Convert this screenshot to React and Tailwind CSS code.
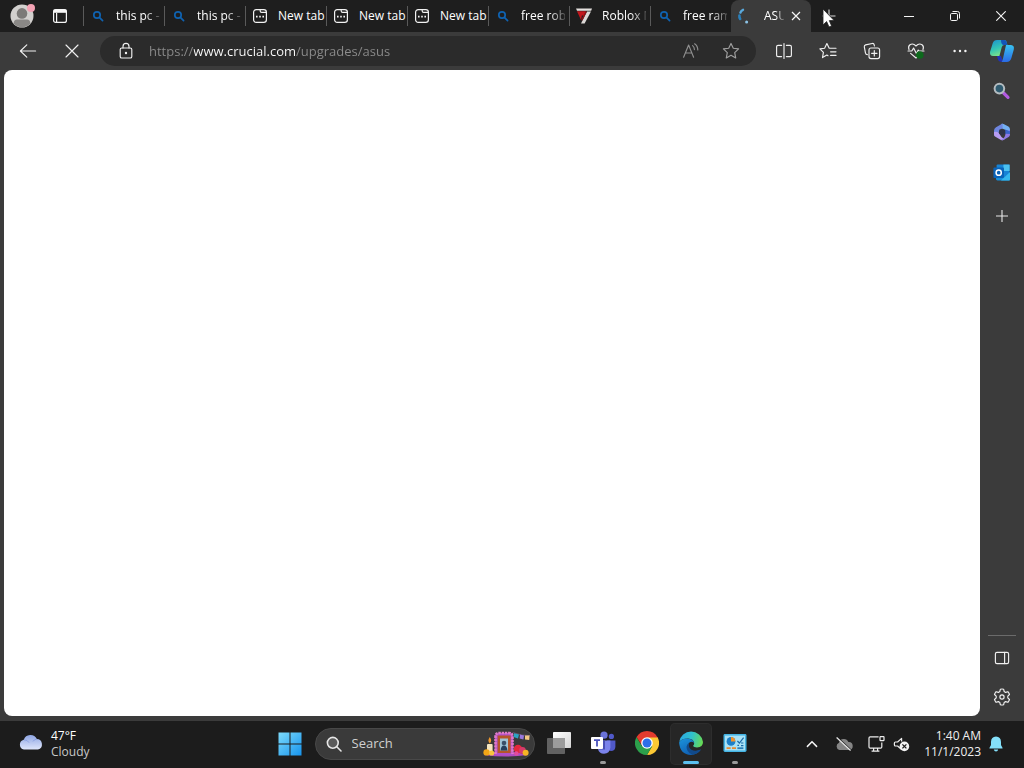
import { useState } from "react";

/* ---------- TAB ICONS ---------- */
function SearchFavicon() {
  return (
    <svg width="12" height="12" viewBox="0 0 12 12" fill="none" stroke="#0f62b0" strokeWidth="1.7" strokeLinecap="round">
      <circle cx="5" cy="5" r="3.2" />
      <path d="M7.6 7.6 L10.6 10.6" />
    </svg>
  );
}

function NewTabFavicon() {
  return (
    <svg width="16" height="16" viewBox="0 0 16 16" fill="none" stroke="#f2f2f2" strokeWidth="1.2">
      <rect x="1.6" y="1.6" width="12.8" height="12.8" rx="2.6" />
      <path d="M8.2 1.8 V3 Q8.2 4.4 9.6 4.4 H14.2" />
      <path d="M4 8.6 H5.6 M7.2 8.6 H8.8 M10.4 8.6 H12" strokeWidth="1.7" />
    </svg>
  );
}

function RobloxFavicon() {
  return (
    <svg width="16" height="16" viewBox="0 0 16 16">
      <path d="M0 0.5 H16 L15.2 2.8 H1 Z" fill="#e4e0de" />
      <path d="M1 3.2 H10 L8 9 L6 7 L5 12 Z" fill="#c3161c" />
      <path d="M11 3.4 H15 L8.6 15.5 H5 Z" fill="#dcd8d6" />
      <path d="M9.4 3.4 H11 L6.4 12.6 L5 12 Z" fill="#8d1115" />
    </svg>
  );
}

function LoadingFavicon() {
  return (
    <svg width="14" height="16" viewBox="0 0 14 16" fill="none" strokeLinecap="round">
      <path d="M3.4 4.6 Q4 2.6 6 1.8" stroke="#5aa9dc" strokeWidth="2.4" />
      <path d="M2.4 7.6 Q2.2 9.4 3.2 11" stroke="#2a7fba" strokeWidth="2.6" />
      <circle cx="9.6" cy="14" r="1.5" fill="#8cc3e6" />
    </svg>
  );
}

const favicons = {
  search: <SearchFavicon />,
  newtab: <NewTabFavicon />,
  roblox: <RobloxFavicon />,
  loading: <LoadingFavicon />,
};

const tabs = [
  { title: "this pc -", icon: "search", long: true },
  { title: "this pc -", icon: "search", long: true },
  { title: "New tab", icon: "newtab" },
  { title: "New tab", icon: "newtab" },
  { title: "New tab", icon: "newtab" },
  { title: "free robux", icon: "search", long: true },
  { title: "Roblox M", icon: "roblox", long: true },
  { title: "free ram", icon: "search", long: true },
];

function LineIcon({ size = 18, color = "#f0f0f0", children }) {
  return (
    <svg
      width={size}
      height={size}
      viewBox="0 0 18 18"
      fill="none"
      stroke={color}
      strokeWidth="1.15"
      strokeLinecap="round"
      strokeLinejoin="round"
    >
      {children}
    </svg>
  );
}

function ToolButton({ label, children }) {
  return (
    <button aria-label={label} className="flex h-9 w-11 shrink-0 items-center justify-center">
      {children}
    </button>
  );
}

/* ---------- TAB STRIP ---------- */
function TabStrip() {
  return (
    <div className="relative flex h-8 bg-[#1e1e1e] text-xs text-white">
      <button aria-label="Profile" className="flex w-11 shrink-0 items-center justify-center">
        <svg width="26" height="26" viewBox="0 0 26 26">
          <circle cx="13" cy="13" r="11.5" fill="#d2d0ce" />
          <path d="M4.5 20.6 Q5 16.6 8 16.6 H18 Q21 16.6 21.5 20.6 A11.5 11.5 0 0 1 4.5 20.6 Z" fill="#8a8886" />
          <circle cx="13" cy="10.4" r="5.3" fill="#7c7a78" />
          <circle cx="22" cy="5" r="4" fill="#f4a3b5" />
        </svg>
      </button>
      <button aria-label="Tab actions" className="flex w-8 shrink-0 items-center justify-center">
        <svg width="16" height="16" viewBox="0 0 16 16" fill="none" stroke="#f5f5f5" strokeWidth="1.2">
          <rect x="1.6" y="1.6" width="12.8" height="12.8" rx="2" />
          <path d="M1.6 3.2 H14.4" strokeWidth="3.2" />
          <path d="M4.6 5 V14" />
        </svg>
      </button>

      <div className="ml-[7px] flex min-w-0">
        {tabs.map((tab, index) => (
          <button
            key={index}
            className="flex w-[81px] shrink-0 items-center before:h-5 before:w-px before:bg-[#5a5a5a]"
          >
            <span className="ml-1.5 flex w-4 justify-center">{favicons[tab.icon]}</span>
            <span
              className={`ml-2.5 text-left whitespace-nowrap ${
                tab.long
                  ? "w-11 overflow-hidden [mask-image:linear-gradient(to_right,black_65%,rgba(0,0,0,0.2))]"
                  : ""
              }`}
            >
              {tab.title}
            </span>
          </button>
        ))}
      </div>

      {/* Active tab */}
      <div className="flex w-20 shrink-0 items-center rounded-t-lg bg-[#3b3b3b]">
        <button className="flex items-center">
          <span className="ml-[5px] flex w-4 justify-center">{favicons.loading}</span>
          <span className="ml-3 w-5 overflow-hidden text-left whitespace-nowrap [mask-image:linear-gradient(to_right,black_60%,rgba(0,0,0,0.2))]">
            ASUS
          </span>
        </button>
        <button aria-label="Close tab" className="flex w-6 items-center justify-center">
          <svg width="10" height="10" viewBox="0 0 10 10" stroke="#f5f5f5" strokeWidth="1.2">
            <path d="M1 1 L9 9 M9 1 L1 9" />
          </svg>
        </button>
      </div>
      <button aria-label="New tab" className="flex w-9 shrink-0 items-center justify-center">
        <svg width="14" height="14" viewBox="0 0 14 14" stroke="#d8d8d8" strokeWidth="1.1">
          <path d="M7 0.5 V13.5 M0.5 7 H13.5" />
        </svg>
      </button>

      {/* Window controls */}
      <div className="ml-auto flex">
        <button aria-label="Minimize" className="flex w-[46px] items-center justify-center">
          <svg width="10" height="10" viewBox="0 0 10 10" stroke="#f5f5f5" strokeWidth="1">
            <path d="M0 5.5 H10" />
          </svg>
        </button>
        <button aria-label="Restore" className="flex w-[46px] items-center justify-center">
          <svg width="10" height="10" viewBox="0 0 10 10" fill="none" stroke="#f5f5f5" strokeWidth="1">
            <rect x="0.5" y="2.5" width="7" height="7" rx="1.2" />
            <path d="M2.5 0.5 H7.5 Q9.5 0.5 9.5 2.5 V7.5" />
          </svg>
        </button>
        <button aria-label="Close" className="flex w-[46px] items-center justify-center">
          <svg width="10" height="10" viewBox="0 0 10 10" stroke="#f5f5f5" strokeWidth="1.1">
            <path d="M0.3 0.3 L9.7 9.7 M9.7 0.3 L0.3 9.7" />
          </svg>
        </button>
      </div>

      {/* Mouse pointer */}
      <svg className="pointer-events-none absolute top-2 left-[822px]" width="13" height="20" viewBox="0 0 13 20">
        <path d="M1 1 V17 L4.6 13.6 L7 19 L9.6 17.9 L7.3 12.6 H12.2 Z" fill="#ffffff" stroke="#1e1e1e" strokeWidth="0.8" />
      </svg>
    </div>
  );
}

/* ---------- TOOLBAR ---------- */
function Toolbar() {
  const [url, setUrl] = useState("https://www.crucial.com/upgrades/asus");

  return (
    <div className="flex h-[38px] items-center pl-1.5">
      <ToolButton label="Back">
        <LineIcon>
          <path d="M1.4 9 H16.6 M7.8 2.8 L1.4 9 L7.8 15.2" />
        </LineIcon>
      </ToolButton>
      <ToolButton label="Stop">
        <LineIcon>
          <path d="M3 3 L15 15 M15 3 L3 15" />
        </LineIcon>
      </ToolButton>

      <div className="mx-1.5 flex h-[30px] min-w-0 flex-1 items-center rounded-full bg-[#2b2b2b] pr-[5px] pl-[17px]">
        <button aria-label="View site information">
          <LineIcon>
            <rect x="3.2" y="6" width="11.6" height="10" rx="1.6" />
            <path d="M6 6 V4.4 A3 3 0 0 1 12 4.4 V6" />
            <circle cx="9" cy="11" r="0.6" fill="#f0f0f0" />
          </LineIcon>
        </button>
        <input
          aria-label="Address bar"
          value={url}
          spellCheck={false}
          onChange={(e) => setUrl(e.target.value)}
          className="ml-3.5 min-w-0 flex-1 bg-[linear-gradient(to_right,#8c8c8c_45px,#ffffff_45px,#ffffff_147px,#8c8c8c_147px)] bg-clip-text pt-0.5 text-[13px] text-transparent caret-white outline-none"
        />
        <button aria-label="Read aloud" className="flex w-10 justify-center">
          <LineIcon color="#8f8f8f">
            <path d="M1.6 15.2 L6.6 3 L11.6 15.2 M3.4 11 H9.8" />
            <path d="M10.6 3.6 Q12.4 5 12.4 7.6 M12.6 1.8 Q15.8 4 15.8 8" />
          </LineIcon>
        </button>
        <button aria-label="Add to favorites" className="flex w-10 justify-center">
          <LineIcon color="#a0a0a0">
            <path d="M9 1.4 L11.3 6.2 L16.6 6.9 L12.7 10.6 L13.7 15.9 L9 13.3 L4.3 15.9 L5.3 10.6 L1.4 6.9 L6.7 6.2 Z" />
          </LineIcon>
        </button>
      </div>

      <ToolButton label="Split screen">
        <LineIcon>
          <path d="M6.6 3.4 H3 Q1.6 3.4 1.6 4.8 V13.2 Q1.6 14.6 3 14.6 H6.6 M11.4 3.4 H15 Q16.4 3.4 16.4 4.8 V13.2 Q16.4 14.6 15 14.6 H11.4 M9 1.6 V16.4" />
        </LineIcon>
      </ToolButton>
      <ToolButton label="Favorites">
        <LineIcon>
          <path d="M11.4 6.2 H10.2 L7.9 1.6 L5.6 6.2 L0.9 6.9 L4.4 10.4 L3.5 15.6 L7.9 13.1 L9 13.7 M10.6 6.2 H17 M11.6 9.8 H17 M11.6 13.4 H17" />
        </LineIcon>
      </ToolButton>
      <ToolButton label="Collections">
        <LineIcon>
          <rect x="6" y="6" width="10.6" height="10.6" rx="2" />
          <path d="M11.3 8.6 V14 M8.6 11.3 H14" />
          <path d="M4.4 12.6 Q2.8 12.6 2.5 11.2 L1.3 4.8 Q1.1 3.3 2.6 2.9 L9.2 1.5 Q10.8 1.2 11.2 2.8 L11.4 4" />
        </LineIcon>
      </ToolButton>
      <ToolButton label="Browser essentials">
        <LineIcon>
          <path d="M2 7.6 Q0.8 4.4 3 2.8 Q6 0.8 9 4 Q12 0.8 15 2.8 Q17.2 4.4 16 7.6" />
          <path d="M1 9 H4.8 L6.6 6 L9.4 11.4 L11.2 8 L12 9 H17" />
          <path d="M3.6 11.4 L9 16 L10.4 14.8" />
          <circle cx="12.8" cy="13" r="3.8" fill="#0d6a1c" stroke="none" />
        </LineIcon>
      </ToolButton>
      <ToolButton label="Settings and more">
        <svg width="18" height="18" viewBox="0 0 18 18" fill="#f5f5f5">
          <circle cx="3.6" cy="9" r="1.2" />
          <circle cx="9" cy="9" r="1.2" />
          <circle cx="14.4" cy="9" r="1.2" />
        </svg>
      </ToolButton>
      <button aria-label="Copilot" className="flex w-[42px] shrink-0 items-center justify-center pr-0.5">
        <svg width="26" height="24" viewBox="0 0 26 24">
          <defs>
            <linearGradient id="pilotLeft" x1="0" y1="0" x2="0.4" y2="1">
              <stop offset="0" stopColor="#1b8fd0" />
              <stop offset="0.6" stopColor="#35c6b4" />
              <stop offset="1" stopColor="#7be08a" />
            </linearGradient>
            <linearGradient id="pilotRight" x1="0" y1="0" x2="0" y2="1">
              <stop offset="0" stopColor="#38c2f0" />
              <stop offset="1" stopColor="#2a6be6" />
            </linearGradient>
          </defs>
          <path d="M8 1 H15 Q17.4 1 17.8 3.4 L18.4 6 H15.4 Q13.4 6 12.8 8 L10.4 17 H4 Q0.6 17 1 13 L3.8 4 Q4.8 1 8 1 Z" fill="url(#pilotLeft)" />
          <path d="M12 1 H15 Q17.4 1 17.8 3.4 L18.4 6 H14.4 Q12 5.6 12 1 Z" fill="#1455b8" />
          <path d="M8 17 H12 L14 22.8 H11.6 Q9.4 22.8 8.8 20 Z" fill="#2033b8" />
          <path d="M17 6 H22 Q25.6 6.4 24.8 10.4 L22.4 19 Q21.2 23 17.6 23 H12.6 Q13.4 22 14 19.6 Z" fill="url(#pilotRight)" />
        </svg>
      </button>
    </div>
  );
}

/* ---------- EDGE SIDEBAR ---------- */
function Sidebar() {
  return (
    <div className="flex w-11 shrink-0 flex-col items-center">
      <button aria-label="Search" className="flex h-[42px] items-center">
        <svg width="18" height="18" viewBox="0 0 18 18">
          <path d="M10.6 11 L15 15.4" stroke="#b25be0" strokeWidth="3.2" strokeLinecap="round" />
          <circle cx="6.4" cy="6.6" r="4.8" fill="#2f5b70" stroke="#b4bcc0" strokeWidth="2" />
        </svg>
      </button>
      <button aria-label="Microsoft 365" className="flex h-10 items-center">
        <svg width="18" height="18" viewBox="0 0 18 18">
          <path d="M8.6 0.8 Q9.6 0.4 10.6 1 L15.4 3.6 Q17 4.6 17 6.6 V9 L7 4.6 Z" fill="#74b0f2" />
          <path d="M9.6 0.6 L3 4.2 Q1 5.4 1 7.6 V12.4 Q4.4 12.4 5.6 10.4 Q6 6.4 9.6 5.6 Z" fill="#6f86e0" />
          <path d="M1 9 V11.4 Q1 13 2.4 13.8 L8 17 Q9.2 17.6 10.4 17 L11.6 16.2 Q8 14.4 6 10.2 Q4 8.4 1 9 Z" fill="#b79cf2" />
          <path d="M17 6.6 V11.6 Q17 13.2 15.6 14 L10.4 17 Q9 17.4 8 16.8 Q12 15 12.6 10.4 Z" fill="#8f7ae6" />
          <path d="M6.4 6.6 L12.4 7 L12.2 10.6 L9 12.8 L6 10.4 Z" fill="#303348" />
          <path d="M12.2 6.6 L17 8.2 V11 L12.4 10.8 Z" fill="#3a62cc" />
        </svg>
      </button>
      <button aria-label="Outlook" className="flex h-[42px] items-center">
        <svg width="18" height="18" viewBox="0 0 18 18">
          <rect x="3.6" y="0.6" width="13" height="14" rx="1" fill="#1683d6" />
          <path d="M10.4 0.6 H16.6 V7 H10.4 Z" fill="#4bc1f0" />
          <path d="M3 8 L17 16.4 H4.6 Q3 16.4 3 15 Z" fill="#1590dc" />
          <path d="M17 8 V15.4 Q17 16.4 16 16.4 H8 Z" fill="#34b7ee" />
          <rect x="0.4" y="3.4" width="10.6" height="10.6" rx="1" fill="#0a63b8" />
          <circle cx="5.7" cy="8.7" r="2.6" fill="none" stroke="#ffffff" strokeWidth="1.5" />
        </svg>
      </button>
      <button aria-label="Customize" className="flex h-11 items-center">
        <svg width="14" height="14" viewBox="0 0 14 14" stroke="#e8e8e8" strokeWidth="1.1">
          <path d="M7 1 V13 M1 7 H13" />
        </svg>
      </button>

      <div className="mt-auto flex flex-col items-center border-t border-[#6b6b6b] px-[5px] pt-0.5">
        <button aria-label="Hide sidebar" className="flex h-10 items-center">
          <LineIcon>
            <rect x="2.4" y="3.4" width="13.2" height="11.2" rx="1.6" />
            <path d="M11.6 3.4 V14.6" />
          </LineIcon>
        </button>
        <button aria-label="Sidebar settings" className="flex h-[38px] items-center">
          <LineIcon>
            <circle cx="9" cy="9" r="2.1" />
            <path d="M7.4 1.2 Q9 0.8 10.6 1.2 L11.2 3.6 L12.6 4.4 L14.9 3.7 Q16 4.9 16.5 6.5 L14.8 8.1 V9.9 L16.5 11.5 Q16 13.1 14.9 14.3 L12.6 13.6 L11.2 14.4 L10.6 16.8 Q9 17.2 7.4 16.8 L6.8 14.4 L5.4 13.6 L3.1 14.3 Q2 13.1 1.5 11.5 L3.2 9.9 V8.1 L1.5 6.5 Q2 4.9 3.1 3.7 L5.4 4.4 L6.8 3.6 Z" />
          </LineIcon>
        </button>
      </div>
    </div>
  );
}

/* ---------- TASKBAR ---------- */
function TaskButton({ label, open, active, children }) {
  return (
    <button
      aria-label={label}
      className={`mx-0.5 flex h-10 w-10 flex-col items-center justify-end rounded ${
        active ? "bg-[#262626] ring-1 ring-[#2d2d2d]" : ""
      }`}
    >
      {children}
      <span
        className={`mt-1.5 h-[3px] rounded-full ${
          active ? "w-4 bg-[#5cc0f0]" : open ? "w-1.5 bg-[#9a9a9a]" : "w-1.5"
        }`}
      />
    </button>
  );
}

function Taskbar() {
  const [query, setQuery] = useState("");

  return (
    <div className="grid h-[47px] grid-cols-[1fr_auto_1fr] items-center bg-[#1c1c1c] pb-px text-xs">
      {/* Weather */}
      <button className="flex items-center pl-[18px] text-left leading-4">
        <svg className="mb-1" width="26" height="18" viewBox="0 0 26 18">
          <defs>
            <linearGradient id="cloud" x1="0" y1="0" x2="0" y2="1">
              <stop offset="0" stopColor="#8fa6e4" />
              <stop offset="1" stopColor="#dfe6fb" />
            </linearGradient>
          </defs>
          <path d="M6 16.6 A5 5 0 0 1 5.8 6.8 A7 7 0 0 1 18.8 6 A5.4 5.4 0 0 1 20 16.6 Z" fill="url(#cloud)" />
          <path d="M5.8 6.8 Q9.4 6.6 11 9.6 M18.8 6 Q16 6.6 15 8.4" fill="none" stroke="#7f97dc" strokeWidth="0.7" />
        </svg>
        <span className="ml-[7px]">
          <span className="block text-white">47°F</span>
          <span className="block text-[#c8c8c8]">Cloudy</span>
        </span>
      </button>

      {/* Pinned apps */}
      <div className="flex items-center">
        <button aria-label="Start" className="flex w-11 justify-center">
          <svg width="24" height="24" viewBox="0 0 24 24">
            <defs>
              <linearGradient id="start" x1="0" y1="0" x2="24" y2="24" gradientUnits="userSpaceOnUse">
                <stop offset="0" stopColor="#7fdcfb" />
                <stop offset="1" stopColor="#1492ec" />
              </linearGradient>
            </defs>
            <path d="M0.5 0.5 H11.5 V11.5 H0.5 Z M12.5 0.5 H23.5 V11.5 H12.5 Z M0.5 12.5 H11.5 V23.5 H0.5 Z M12.5 12.5 H23.5 V23.5 H12.5 Z" fill="url(#start)" />
          </svg>
        </button>

        <label className="mr-0.5 ml-[3px] flex h-8 w-[220px] items-center rounded-full border border-[#484848] bg-[#3a3a3a] pr-0.5 pl-2.5">
          <svg width="16" height="16" viewBox="0 0 16 16" fill="none" stroke="#e6e6e6" strokeWidth="1.6" strokeLinecap="round">
            <circle cx="6.8" cy="6.8" r="5.4" fill="#5a5a5a" />
            <path d="M10.8 10.8 L15 15" />
          </svg>
          <input
            aria-label="Search"
            placeholder="Search"
            value={query}
            onChange={(e) => setQuery(e.target.value)}
            className="ml-2.5 min-w-0 flex-1 text-[13px] text-white outline-none placeholder:text-[#d0d0d0]"
          />
          <svg width="50" height="26" viewBox="0 0 50 26">
            <path d="M2 24 Q24 17 46 24 Q24 27 2 24 Z" fill="#b04cc0" />
            <path d="M13 24 V6 Q13 2 17 2 H27 Q31 2 31 6 V24 Z" fill="#b14fc8" />
            <path d="M13.5 23 V6 Q13.5 2 17 2 H27 Q30.5 2 30.5 6 V23" fill="none" stroke="#e07ac8" strokeWidth="2.6" strokeDasharray="2.4 0.8" />
            <rect x="15.6" y="4.5" width="13" height="17.5" fill="#b5562a" />
            <rect x="18" y="7.5" width="8" height="12" fill="#9fc4d6" />
            <path d="M18.6 19.5 Q19 14.5 22 14.5 Q25 14.5 25.4 19.5 Z" fill="#27405c" />
            <circle cx="22" cy="12" r="2.3" fill="#3a5068" />
            <rect x="5" y="13" width="5.6" height="9" rx="1" fill="#f6e6c0" />
            <path d="M7.8 6 Q10.6 10 7.8 12.4 Q5 10 7.8 6 Z" fill="#f49a2c" />
            <circle cx="4.6" cy="21.4" r="3.2" fill="#f2a516" />
            <circle cx="9.6" cy="22" r="2.6" fill="#f7c53c" />
            <circle cx="36" cy="18" r="4.2" fill="#e5283c" />
            <circle cx="40.4" cy="19.4" r="3.4" fill="#d63a6a" />
            <circle cx="43.6" cy="21.8" r="3" fill="#f5b325" />
            <circle cx="34.4" cy="22.4" r="2.2" fill="#e24c9c" />
            <path d="M31 1.6 Q40 5 48 4.6" fill="none" stroke="#6f5a78" strokeWidth="0.8" />
            <path d="M32 2.2 L37 3.4 L36 7.4 L31.6 6 Z" fill="#2ba4c4" />
            <path d="M38 3.6 L42 4.4 L41.4 8.4 L37.6 7.4 Z" fill="#9a78e0" />
            <path d="M43 4.6 L47.6 4.6 L47.2 9 L43 8.6 Z" fill="#f3c884" />
          </svg>
        </label>

        <TaskButton label="Task view">
          <svg width="26" height="24" viewBox="0 0 26 24">
            <defs>
              <linearGradient id="viewFront" x1="0" y1="0" x2="1" y2="1">
                <stop offset="0" stopColor="#ffffff" />
                <stop offset="1" stopColor="#d4d4d4" />
              </linearGradient>
            </defs>
            <rect x="7" y="1" width="18" height="16" rx="0.8" fill="url(#viewFront)" />
            <rect x="1" y="7" width="18" height="16" rx="0.8" fill="#626262" />
            <rect x="7" y="7" width="12" height="10" fill="#9c9c9c" />
          </svg>
        </TaskButton>
        <TaskButton label="Teams" open>
          <svg width="26" height="24" viewBox="0 0 26 24">
            <circle cx="14" cy="4.2" r="3.6" fill="#6a72d8" />
            <circle cx="21.4" cy="5.4" r="2.6" fill="#5059c9" />
            <path d="M17 9.6 H25.4 V16 Q25 20 21 20 L17 19 Z" fill="#5059c9" />
            <path d="M8 9.6 H20.4 V16.6 Q19.6 22.8 14 22.8 Q9 22.8 8 18 Z" fill="#7b83eb" />
            <path d="M12 9.6 H15 V18.6 H8.4 Z" fill="#4a50b4" />
            <rect x="1" y="6" width="12" height="12" rx="1" fill="#ffffff" />
            <path d="M4 9.2 H10 M7 9.2 V15.6" stroke="#4b53bc" strokeWidth="1.8" />
          </svg>
        </TaskButton>
        <TaskButton label="Chrome">
          <svg width="24" height="24" viewBox="0 0 24 24">
            <path d="M12 6 H22.4 A12 12 0 0 1 12 24 L17.2 15 Z" fill="#fcc934" />
            <path d="M1.6 6 A12 12 0 0 0 12 24 L17.2 15 L6.8 15 Z" fill="#2c9f4b" />
            <path d="M12 6.4 H22.6 Q19 0 12 0 Q5 0 1.6 6 L6.6 14 Z" fill="#e33b2e" />
            <circle cx="12" cy="12" r="5.8" fill="#ffffff" />
            <circle cx="12" cy="12" r="4.5" fill="#2c6fe8" />
          </svg>
        </TaskButton>
        <TaskButton label="Microsoft Edge" active>
          <svg width="24" height="24" viewBox="0 0 24 24">
            <defs>
              <linearGradient id="edgeTop" x1="0" y1="0.3" x2="1" y2="0.5">
                <stop offset="0" stopColor="#2aa7e4" />
                <stop offset="0.5" stopColor="#30c1cc" />
                <stop offset="1" stopColor="#66da56" />
              </linearGradient>
              <linearGradient id="edgeBody" x1="0" y1="0" x2="0.6" y2="1">
                <stop offset="0" stopColor="#1b94dc" />
                <stop offset="1" stopColor="#0f5cb0" />
              </linearGradient>
            </defs>
            <path d="M0.2 11 A12 12 0 0 1 24 11 Q24 16.4 18 16.4 Q14.6 16.4 14 15 Q15.2 14 15.2 12 Q14.6 8 9 7.6 Q3 7.6 0.2 11 Z" fill="url(#edgeTop)" />
            <path d="M0.1 11.4 Q2.6 7.4 8 7.4 Q14.4 7.8 15.2 12 Q13 9.6 10.4 11.4 Q8 15 11 18.6 Q15.4 22 21.8 18.6 Q18 24 12 24 Q1 23.4 0.1 11.4 Z" fill="url(#edgeBody)" />
            <path d="M10.2 11.4 Q6 15 8.4 19.6 Q10 22.6 13.6 23.8 Q19.4 23 22 18.6 Q16 21 12 18.4 Q8.6 15.4 10.2 11.4 Z" fill="#114a8b" />
          </svg>
        </TaskButton>
        <TaskButton label="Control Panel" open>
          <svg width="24" height="24" viewBox="0 0 24 24">
            <rect x="0.5" y="3" width="23" height="18" rx="1.4" fill="#45b4e4" />
            <rect x="2" y="4.6" width="20" height="14.8" fill="#a9e2f6" />
            <circle cx="8" cy="10.4" r="4.4" fill="#1c7fc8" />
            <path d="M8 10.4 V6 A4.4 4.4 0 0 1 12.4 10.4 Z" fill="#f0922c" />
            <path d="M14.4 10 L16.4 12 L20.6 6.6 M14.4 14.4 H16 M18 12 H20.4 M18 14.6 H20.4" fill="none" stroke="#1b6aa8" strokeWidth="1.2" />
            <path d="M3.6 17.2 H7.6 M9 17.2 H13" stroke="#e88a30" strokeWidth="1.8" />
            <path d="M14.4 17.2 H20.4" stroke="#2b7fb8" strokeWidth="1.8" />
          </svg>
        </TaskButton>
      </div>

      {/* System tray */}
      <div className="flex items-center justify-end pr-[21px]">
        <button aria-label="Show hidden icons" className="flex w-8 justify-center">
          <svg width="12" height="8" viewBox="0 0 12 8" fill="none" stroke="#f5f5f5" strokeWidth="1.5" strokeLinecap="round">
            <path d="M1.4 6.4 L6 1.8 L10.6 6.4" />
          </svg>
        </button>
        <button aria-label="OneDrive" className="flex w-8 justify-center">
          <svg width="18" height="16" viewBox="0 0 18 16">
            <path d="M4.4 14 A3.8 3.8 0 0 1 4 6.8 A5 5 0 0 1 13.4 6 A4 4 0 0 1 14 14 Z" fill="#858585" />
            <path d="M2.6 1.6 L16.2 14.2" stroke="#1c1c1c" strokeWidth="1.4" />
            <path d="M1.6 1.6 L15.6 14.6" stroke="#e6e6e6" strokeWidth="1.3" />
          </svg>
        </button>
        <button aria-label="Network and volume" className="ml-2 flex items-center gap-2">
          <svg width="17" height="18" viewBox="0 0 17 18" fill="none" stroke="#ededed" strokeWidth="1.2">
            <path d="M10.6 1.8 H2.2 Q1 1.8 1 3 V12 Q1 13.2 2.2 13.2 H12.6 Q13.8 13.2 13.8 12 V7.4 M5.6 13.2 V16 M9.6 13.2 V16 M3.6 16.2 H11.4" />
            <rect x="12" y="1.6" width="4" height="4" rx="0.6" />
          </svg>
          <svg width="17" height="16" viewBox="0 0 17 16">
            <path d="M8 11.4 V13 L4.6 10 H2.4 Q1.4 10 1.4 9 V7 Q1.4 6 2.4 6 H4.6 L8.6 2.4 V5.6" fill="none" stroke="#ededed" strokeWidth="1.2" strokeLinejoin="round" />
            <circle cx="11.4" cy="10.4" r="4.8" fill="#f2f2f2" />
            <path d="M9.4 8.4 L13.4 12.4 M13.4 8.4 L9.4 12.4" stroke="#1c1c1c" strokeWidth="1.3" />
          </svg>
        </button>
        <button className="ml-3.5 text-right leading-4 text-[#f0f0f0]">
          <span className="block">1:40 AM</span>
          <span className="block">11/1/2023</span>
        </button>
        <button aria-label="Notifications" className="ml-2">
          <svg width="14" height="16" viewBox="0 0 14 16" fill="#84e0fa">
            <path d="M7 0.6 Q11.8 0.8 12 6 V9 L13.6 12 Q13.6 12.6 13 12.6 H1 Q0.4 12.6 0.4 12 L2 9 V6 Q2.2 0.8 7 0.6 Z" />
            <path d="M4.8 13.6 H9.2 Q8.8 15.6 7 15.6 Q5.2 15.6 4.8 13.6 Z" />
          </svg>
        </button>
      </div>
    </div>
  );
}

function App() {
  return (
    <div className="flex h-screen flex-col overflow-hidden bg-[#3b3b3b] font-['Open_Sans',sans-serif]">
      <TabStrip />
      <Toolbar />
      <div className="flex min-h-0 flex-1 pb-[5px] pl-1">
        <main className="flex-1 rounded-lg bg-white" />
        <Sidebar />
      </div>
      <Taskbar />
    </div>
  );
}

export default App;
